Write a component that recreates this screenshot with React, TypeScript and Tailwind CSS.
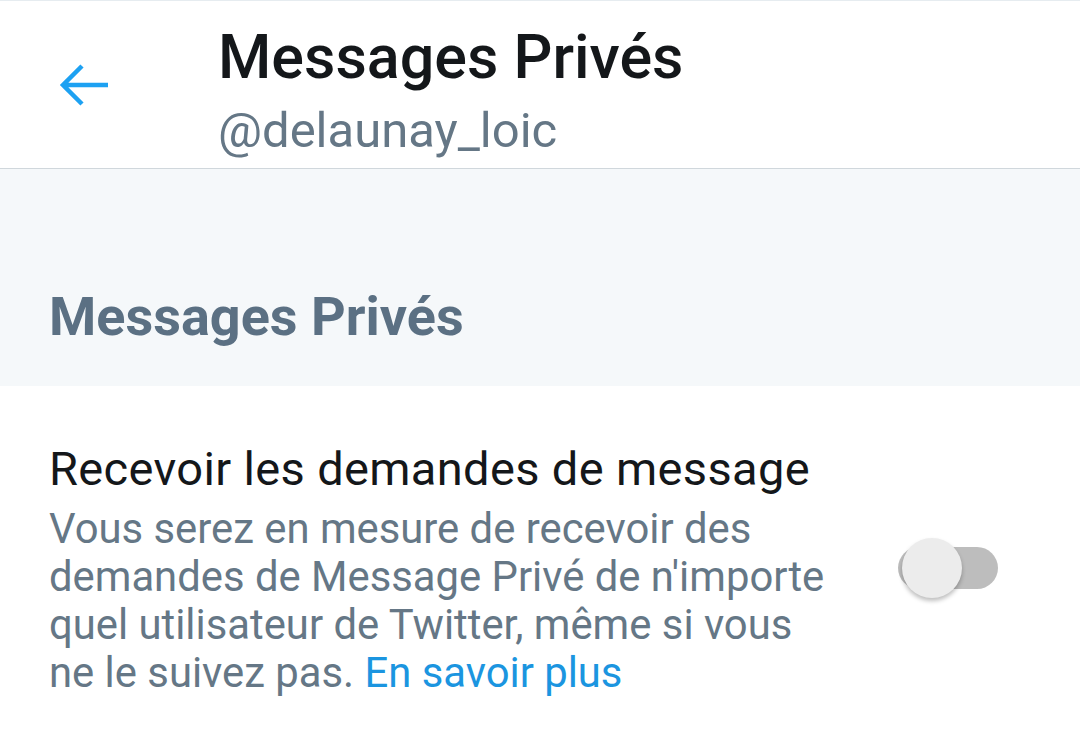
import React from "react";

export default function App() {
  return (
    <div
      className="w-[1080px] h-[756px] bg-white overflow-hidden"
      style={{ fontFamily: "Roboto, 'Noto Sans', sans-serif" }}
    >
      <header className="h-[169px] border-t border-b border-t-[#e6ecf0] border-b-[#d0d7dc] bg-white flex">
        <div className="w-[218px] flex items-start pl-[58px] pt-[59px]">
          <svg width="54" height="50" viewBox="0 0 54 50" fill="none">
            <path
              d="M50 25 H6 M24 6 L5 25 L24 44"
              stroke="#1da1f2"
              strokeWidth="4.5"
              strokeLinecap="butt"
              strokeLinejoin="miter"
            />
          </svg>
        </div>
        <div className="flex flex-col pt-[21px]">
          <div className="text-[61px] leading-[70px] font-medium text-[#14171a]">
            Messages Privés
          </div>
          <div className="mt-[12px] text-[49px] leading-[54px] text-[#657786]">
            @delaunay_loic
          </div>
        </div>
      </header>
      <section className="h-[217px] bg-[#f5f8fa] pl-[49px] pt-[118px]">
        <div className="text-[54px] leading-[60px] font-bold text-[#5b7083]">
          Messages Privés
        </div>
      </section>
      <div className="flex items-center pl-[49px] pr-[82px] pt-[57px]">
        <div className="flex-1">
          <div className="text-[47px] leading-[52px] tracking-[0.35px] text-[#14171a]">
            Recevoir les demandes de message
          </div>
          <div className="mt-[10px] text-[41.8px] leading-[48px] text-[#657786]">
            Vous serez en mesure de recevoir des
            <br />
            demandes de Message Privé de n'importe
            <br />
            quel utilisateur de Twitter, même si vous
            <br />
            ne le suivez pas.{" "}
            <span className="text-[#1b95e0]">En savoir plus</span>
          </div>
        </div>
        <div className="relative w-[100px] h-[60px] flex items-center -mt-[4px]">
          <div className="w-[100px] h-[42px] rounded-full bg-[#bdbdbd]" />
          <div className="absolute left-[4px] top-0 w-[60px] h-[60px] rounded-full bg-[#ececec] shadow-[0_3px_4px_rgba(0,0,0,0.25)]" />
        </div>
      </div>
    </div>
  );
}
